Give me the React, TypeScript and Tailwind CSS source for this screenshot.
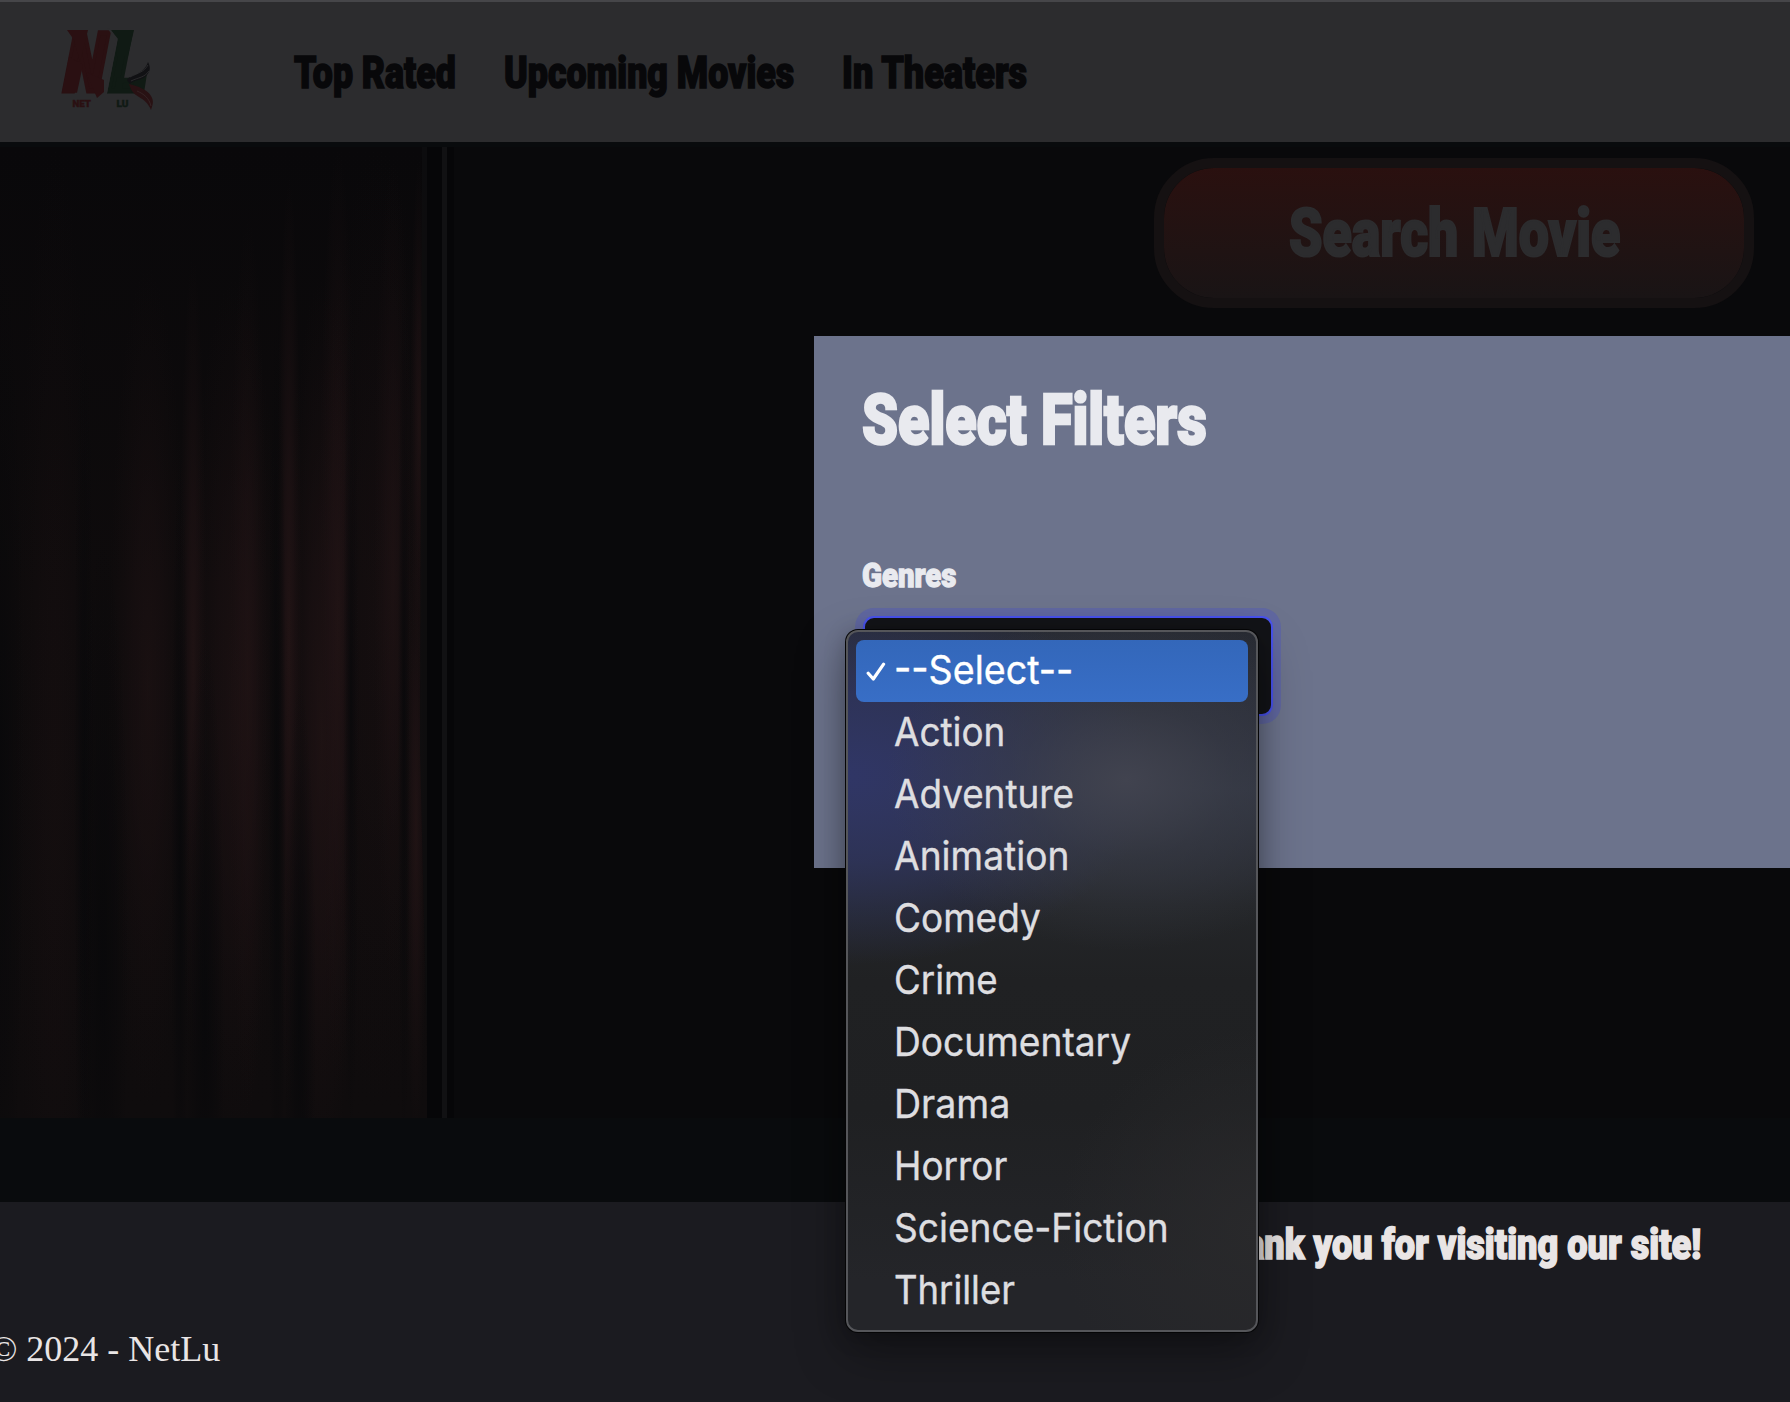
import { useLayoutEffect, useRef, useState } from "react";
import clsx from "clsx";

const genres = [
  { name: "--Select--", width: 179 },
  { name: "Action", width: 111 },
  { name: "Adventure", width: 180 },
  { name: "Animation", width: 175 },
  { name: "Comedy", width: 147 },
  { name: "Crime", width: 104 },
  { name: "Documentary", width: 237 },
  { name: "Drama", width: 116 },
  { name: "Horror", width: 113 },
  { name: "Science-Fiction", width: 275 },
  { name: "Thriller", width: 121 },
];

const folds = [
  { x: 55, y: 620, rx: 40, ry: 620, o: 0.25 },
  { x: 148, y: 540, rx: 40, ry: 420, o: 0.5 },
  { x: 193, y: 510, rx: 14, ry: 400, o: 0.75 },
  { x: 235, y: 560, rx: 48, ry: 430, o: 0.55 },
  { x: 248, y: 520, rx: 20, ry: 450, o: 0.55 },
  { x: 289, y: 500, rx: 13, ry: 470, o: 0.9 },
  { x: 322, y: 590, rx: 38, ry: 460, o: 0.7 },
  { x: 338, y: 470, rx: 20, ry: 470, o: 0.75 },
  { x: 378, y: 480, rx: 60, ry: 480, o: 0.3 },
  { x: 393, y: 430, rx: 20, ry: 420, o: 0.55 },
  { x: 419, y: 280, rx: 9, ry: 270, o: 0.7 },
  { x: 416, y: 680, rx: 11, ry: 320, o: 0.8 },
];

const shades = [
  { x: 0, y: 620, rx: 24, ry: 560 },
  { x: 84, y: 650, rx: 10, ry: 520 },
  { x: 103, y: 800, rx: 26, ry: 420 },
  { x: 180, y: 720, rx: 9, ry: 420 },
  { x: 205, y: 860, rx: 20, ry: 380 },
  { x: 277, y: 640, rx: 9, ry: 500 },
  { x: 300, y: 860, rx: 16, ry: 330 },
  { x: 351, y: 560, rx: 8, ry: 440 },
  { x: 404, y: 560, rx: 6, ry: 460 },
];

/** Condenses its text horizontally so that it fills the given width. */
function Fitted({ text, width, className }: { text: string; width: number; className?: string }) {
  const ref = useRef<HTMLSpanElement>(null);
  const [scale, setScale] = useState(1);
  useLayoutEffect(() => {
    if (ref.current) setScale(width / ref.current.offsetWidth);
  }, [width]);
  return (
    <span className={clsx("block whitespace-nowrap leading-none", className)} style={{ width }}>
      <span ref={ref} className="inline-block origin-left" style={{ transform: `scaleX(${scale})` }}>
        {text}
      </span>
    </span>
  );
}

const display = "font-['Roboto',sans-serif] font-black";

function Logo() {
  return (
    <svg className="h-[90px] w-[100px] shrink-0 overflow-visible" viewBox="60 24 100 90">
      <g fontFamily="Roboto, sans-serif" fontWeight="900">
        <text transform="translate(106 90.500) skewX(-11) scale(.74 1)" fontSize="82" fill="#101a14" stroke="#101a14" strokeWidth="5">L</text>
        <path d="M111 30h23l-6 26h-12l2-15z M131 92.700l4-14 12-5-3 19z" fill="#101a14" />
        <text transform="translate(60.500 90.500) skewX(-11) scale(.7 1)" fontSize="82" fill="#2a1012" stroke="#2a1012" strokeWidth="5">N</text>
        <path d="M67 30h21l-8 32-6-22z M62 92.700h15l6-28-14-8z M86 72l18 8v12l-7 6z" fill="#2a1012" />
        <path d="M108.500 28.500 116.800 39 106 93.500" fill="none" stroke="#2c2c2e" strokeWidth="2" />
        <text x="72.500" y="106.800" fontSize="9.800" textLength="18.500" lengthAdjust="spacingAndGlyphs" fill="#2a1012" stroke="#2a1012" strokeWidth=".4">NET</text>
        <text x="116.500" y="106.800" fontSize="9.800" textLength="12" lengthAdjust="spacingAndGlyphs" fill="#101a14" stroke="#101a14" strokeWidth=".4">LU</text>
      </g>
      <path d="M127 80c3-6 17-5 21-18 3 6 2 9-1 13-5 6-13 4-17 9z" fill="#111114" />
      <path d="M130 77c8-4 14-5 18-12M131 81c8-4 13-3 18-10" stroke="#333335" strokeWidth=".7" fill="none" />
      <path d="M129 84c8 2 18 5 22 12 3 5 2 8 0 14-3-7-7-10-12-13-5-3-8-6-10-13z" fill="#281113" />
      <path d="M137 91c7 3 12 7 14 15" stroke="#39292b" strokeWidth=".7" fill="none" />
    </svg>
  );
}

function Curtain() {
  return (
    <svg className="h-[971px] w-[427px]" viewBox="0 0 427 971" preserveAspectRatio="none">
      <defs>
        <radialGradient id="fold">
          <stop offset="0" stopColor="#241516" />
          <stop offset=".4" stopColor="#211315" stopOpacity=".7" />
          <stop offset="1" stopColor="#1a1011" stopOpacity="0" />
        </radialGradient>
        <radialGradient id="shade">
          <stop offset="0" stopColor="#08080a" stopOpacity=".85" />
          <stop offset="1" stopColor="#08080a" stopOpacity="0" />
        </radialGradient>
        <linearGradient id="base" x2="0" y2="1">
          <stop offset="0" stopColor="#09080a" />
          <stop offset=".45" stopColor="#0e0b0c" />
          <stop offset="1" stopColor="#0f0c0d" />
        </linearGradient>
      </defs>
      <rect width="427" height="971" fill="url(#base)" />
      {folds.map((f, i) => (
        <ellipse key={i} cx={f.x} cy={f.y} rx={f.rx} ry={f.ry} opacity={f.o} fill="url(#fold)" />
      ))}
      {shades.map((s, i) => (
        <ellipse key={i} cx={s.x} cy={s.y} rx={s.rx} ry={s.ry} fill="url(#shade)" />
      ))}
      <path d="M422 0h5v900l-7-300z" fill="#0e0e0f" opacity=".8" />
    </svg>
  );
}

function GenreMenu() {
  return (
    <ul className="absolute left-[-19px] top-[12px] z-20 w-[412px] rounded-[12px] border-2 border-[#55565a] bg-[#202123] bg-[radial-gradient(ellipse_240px_170px_at_68%_150px,#41434f_0%,#3c3f4b80_45%,transparent_100%),radial-gradient(ellipse_310px_190px_at_0%_145px,#303666_0%,#2f3561c0_45%,transparent_100%),radial-gradient(ellipse_200px_200px_at_100%_600px,#29292b,transparent),linear-gradient(180deg,#272a32_0px,#2c2f3a_110px,#30343f_160px,#2a2d35_215px,#242629_275px,#202123_350px,#1f2022_480px,#242529_650px)] bg-origin-border p-2 font-['Inter',sans-serif] text-[39.500px] font-normal text-[#dedee0] shadow-[0_0_0_1px_#050506,0_20px_50px_rgba(0,0,0,0.35),0_4px_22px_rgba(0,0,0,0.22)] [-webkit-text-stroke:0.4px]">
      {genres.map((genre, i) => (
        <li
          key={genre.name}
          className={clsx("flex h-[62px] items-center rounded-lg", i === 0 && "bg-linear-to-b from-[#3367ba] to-[#386ec6] text-white")}
        >
          <span className="flex w-[38px] shrink-0 justify-center pl-0.5">
            {i === 0 && (
              <svg className="mt-0.5 h-5 w-5" viewBox="0 0 20 20" fill="none" stroke="white" strokeWidth="3.200" strokeLinecap="round" strokeLinejoin="round">
                <path d="M2.200 11.200 7.300 17 17.600 2.200" />
              </svg>
            )}
          </span>
          <Fitted text={genre.name} width={genre.width} />
        </li>
      ))}
    </ul>
  );
}

function FilterPanel() {
  return (
    <section className="absolute left-[814px] right-0 top-[336px] z-10 h-[532px] bg-[#6c738c] pl-12 pt-[49px] text-[#e9eaef]">
      <h2>
        <Fitted text="Select Filters" width={345} className={clsx(display, "text-[70px] [-webkit-text-stroke:2.4px]")} />
      </h2>
      <div className="mt-[103px]">
        <Fitted text="Genres" width={94} className={clsx(display, "text-[34px] [-webkit-text-stroke:1.3px]")} />
      </div>
      <div className="relative ml-px mt-6 h-[100px] w-[410px] rounded-[11px] border-2 border-[#4852ee] bg-[#131418] shadow-[0_0_0_8px_#6067a0]">
        <GenreMenu />
      </div>
    </section>
  );
}

export default function App() {
  return (
    <div className="relative flex h-[1402px] w-[1790px] flex-col overflow-hidden bg-[#090b0d]">
      <header className="flex h-[142px] shrink-0 items-start border-t-2 border-[#464649] bg-[#2c2c2e] pl-[60px] pt-[22px]">
        <Logo />
        <nav className="ml-[134px] mt-[27px] flex gap-12 text-[#08080a]">
          <Fitted text="Top Rated" width={162} className={clsx(display, "text-[44px] [-webkit-text-stroke:1.6px]")} />
          <Fitted text="Upcoming Movies" width={290} className={clsx(display, "text-[44px] [-webkit-text-stroke:1.6px]")} />
          <Fitted text="In Theaters" width={185} className={clsx(display, "text-[44px] [-webkit-text-stroke:1.6px]")} />
        </nav>
      </header>

      <main className="flex h-[1060px] shrink-0 items-start pt-[5px]">
        <Curtain />
        <div className="flex h-[971px] w-[27px] bg-[#060608] pl-[15px]">
          <div className="w-[5px] bg-[#111113]" />
        </div>
        <div className="flex h-[971px] flex-1 items-start justify-end bg-[#09090b] pr-9 pt-[11px]">
          <button className="flex h-[150px] w-[600px] items-start justify-center rounded-[60px] border-[10px] border-[#151112] bg-linear-to-b from-[#2a100f] to-[#191415] bg-clip-padding bg-origin-padding pt-[33px] text-[#2c2c2e]">
            <Fitted text="Search Movie" width={331} className={clsx(display, "text-left text-[66px] [-webkit-text-stroke:2.2px]")} />
          </button>
        </div>
      </main>

      <footer className="flex h-[200px] shrink-0 flex-col bg-[#1b1b20] text-[#e9e5e5]">
        <div className="ml-[1202px] mt-[21px]">
          <Fitted text="Thank you for visiting our site!" width={499} className={clsx(display, "text-[43px] [-webkit-text-stroke:1.6px]")} />
        </div>
        <p className="-ml-[10px] mt-[65px] whitespace-pre font-['Liberation_Serif',serif] text-[36px] leading-none">© 2024 - NetLu</p>
      </footer>

      <FilterPanel />
    </div>
  );
}
